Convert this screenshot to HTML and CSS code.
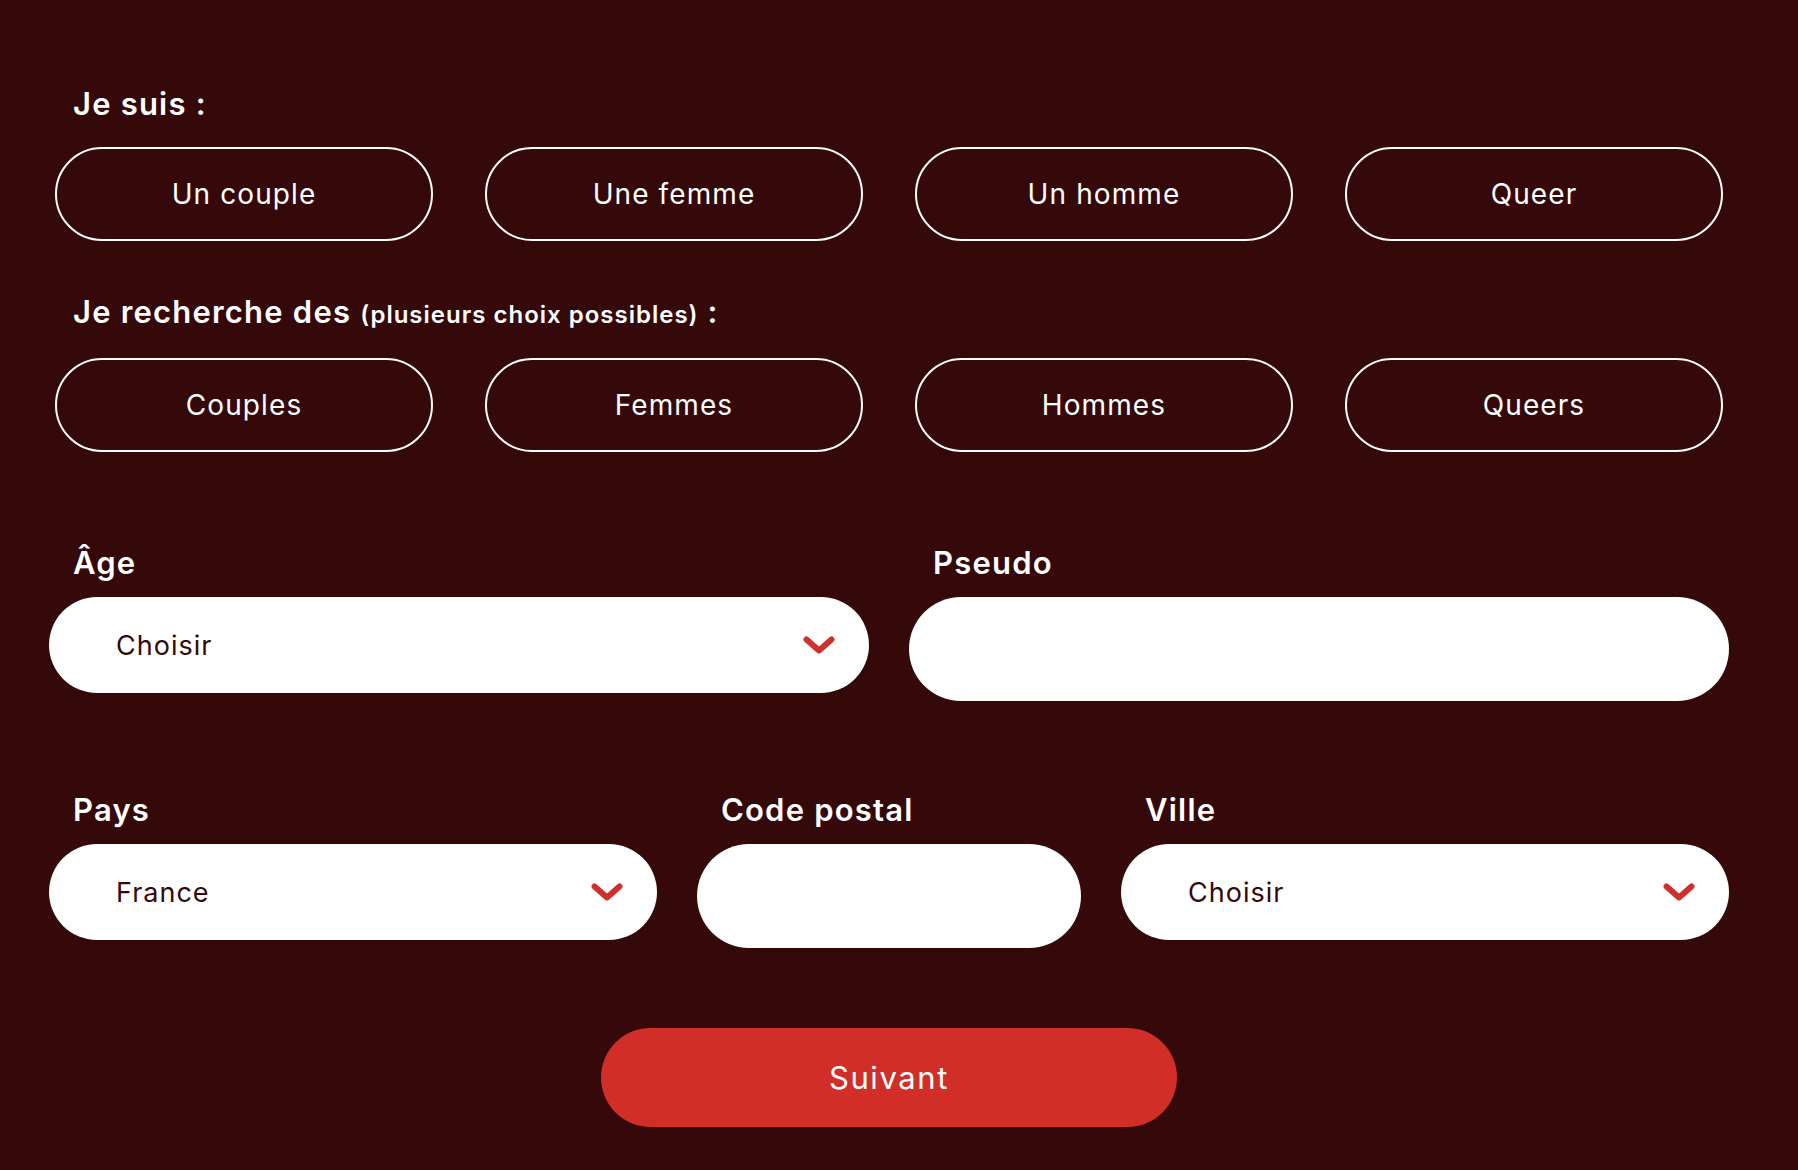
FILE: index.html
```html
<!DOCTYPE html>
<html lang="fr">
<head>
    <meta charset="UTF-8">
    <meta name="viewport" content="width=device-width, initial-scale=1.0">
    <title>Inscription</title>
    <link rel="stylesheet" href="styles.css">
</head>
<body>

    <main class="signup">

        <section class="group">
            <h2 class="group-title">Je suis :</h2>
            <div class="choices">
                <button class="choice" type="button">Un couple</button>
                <button class="choice" type="button">Une femme</button>
                <button class="choice" type="button">Un homme</button>
                <button class="choice" type="button">Queer</button>
            </div>
        </section>

        <section class="group group-search">
            <h2 class="group-title">Je recherche des <small>(plusieurs choix possibles)</small> :</h2>
            <div class="choices">
                <button class="choice" type="button">Couples</button>
                <button class="choice" type="button">Femmes</button>
                <button class="choice" type="button">Hommes</button>
                <button class="choice" type="button">Queers</button>
            </div>
        </section>

        <div class="row row-two">
            <div class="field">
                <label class="field-label">Âge</label>
                <div class="select">
                    <span>Choisir</span>
                    <svg class="chevron" viewBox="0 0 32 18" width="32" height="18"><path d="M3.5 3.5 L16 14.5 L28.5 3.5" fill="none" stroke="#d0302b" stroke-width="6" stroke-linecap="round" stroke-linejoin="round"/></svg>
                </div>
            </div>
            <div class="field">
                <label class="field-label" for="pseudo">Pseudo</label>
                <input class="text-input" id="pseudo" type="text">
            </div>
        </div>

        <div class="row row-three">
            <div class="field">
                <label class="field-label">Pays</label>
                <div class="select">
                    <span>France</span>
                    <svg class="chevron" viewBox="0 0 32 18" width="32" height="18"><path d="M3.5 3.5 L16 14.5 L28.5 3.5" fill="none" stroke="#d0302b" stroke-width="6" stroke-linecap="round" stroke-linejoin="round"/></svg>
                </div>
            </div>
            <div class="field">
                <label class="field-label" for="cp">Code postal</label>
                <input class="text-input" id="cp" type="text">
            </div>
            <div class="field">
                <label class="field-label">Ville</label>
                <div class="select">
                    <span>Choisir</span>
                    <svg class="chevron" viewBox="0 0 32 18" width="32" height="18"><path d="M3.5 3.5 L16 14.5 L28.5 3.5" fill="none" stroke="#d0302b" stroke-width="6" stroke-linecap="round" stroke-linejoin="round"/></svg>
                </div>
            </div>
        </div>

        <div class="actions">
            <button class="next" type="button">Suivant</button>
        </div>

    </main>

</body>
</html>
```

FILE: styles.css
```css
body {
    font-family: 'Inter', 'Noto Sans', sans-serif;
    margin: 0;
    padding: 0;
    background-color: #350809;
    color: #fff;
    min-height: 1170px;
}

.signup {
    width: 1680px;
    margin: 0 0 0 49px;
    padding-top: 86px;
}

.group-title {
    margin: 0 0 25px 24px;
    font-size: 31px;
    line-height: 36px;
    font-weight: 600;
    letter-spacing: 1.2px;
}

.group-title small {
    font-size: 24px;
    font-weight: 600;
    letter-spacing: 1px;
}

.group-search {
    margin-top: 53px;
}

.choices {
    display: grid;
    grid-template-columns: repeat(4, 1fr);
    gap: 52px;
    padding: 0 6px;
}

.choice {
    height: 94px;
    border: 2px solid #fff;
    border-radius: 47px;
    background: transparent;
    color: #fff;
    font-family: inherit;
    font-size: 28px;
    letter-spacing: 1.1px;
    cursor: pointer;
}

.row {
    display: flex;
    gap: 40px;
    align-items: flex-start;
}

.row-two {
    margin-top: 93px;
}

.row-two .field {
    flex: 1;
}

.row-three {
    margin-top: 91px;
}

.row-three .field {
    width: 608px;
}

.row-three .field:nth-child(2) {
    width: 384px;
}

.field-label {
    display: block;
    margin: 0 0 16px 24px;
    font-size: 31px;
    line-height: 36px;
    font-weight: 600;
    letter-spacing: 1.2px;
}

.select {
    display: flex;
    justify-content: space-between;
    align-items: center;
    height: 96px;
    padding: 0 34px 0 67px;
    background-color: #fff;
    border-radius: 48px;
    color: #350809;
    font-size: 27px;
    letter-spacing: 1px;
}

.text-input {
    display: block;
    box-sizing: border-box;
    width: 100%;
    height: 104px;
    border: none;
    border-radius: 52px;
    background-color: #fff;
    padding: 0 40px;
    font-family: inherit;
    font-size: 27px;
    outline: none;
}

.actions {
    display: flex;
    justify-content: center;
    margin-top: 80px;
}

.next {
    width: 576px;
    height: 99px;
    border: none;
    border-radius: 50px;
    background-color: #d02e27;
    color: #fff;
    font-family: inherit;
    font-size: 31px;
    letter-spacing: 1.6px;
    cursor: pointer;
}
```
